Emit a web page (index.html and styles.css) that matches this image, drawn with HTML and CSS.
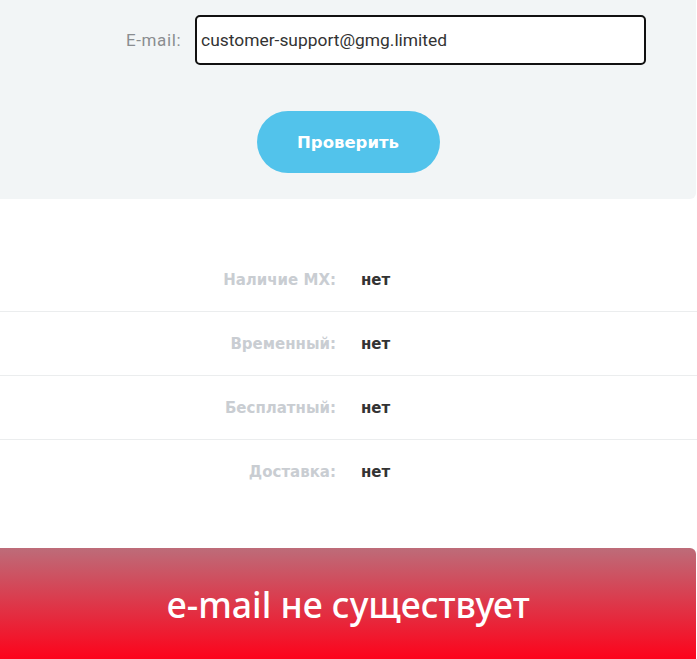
FILE: index.html
```html
<!DOCTYPE html>
<html>
<head>
    <title>Проверка e-mail</title>
    <link rel="stylesheet" href="styles.css">
</head>
<body>
    <div class="check-form">
        <div class="field">
            <label for="email">E-mail:</label>
            <input id="email" type="text" value="customer-support@gmg.limited">
        </div>
        <div class="actions">
            <button class="btn-check">Проверить</button>
        </div>
    </div>

    <div class="results">
        <div class="row">
            <div class="row-label">Наличие MX:</div>
            <div class="row-value">нет</div>
        </div>
        <div class="row">
            <div class="row-label">Временный:</div>
            <div class="row-value">нет</div>
        </div>
        <div class="row">
            <div class="row-label">Бесплатный:</div>
            <div class="row-value">нет</div>
        </div>
        <div class="row">
            <div class="row-label">Доставка:</div>
            <div class="row-value">нет</div>
        </div>
    </div>

    <div class="verdict">e-mail не существует</div>
</body>
</html>
```

FILE: styles.css
```css
body {
    margin: 0;
    background: #fff;
    font-family: "Noto Sans", Arial, sans-serif;
    overflow: hidden;
}
.check-form {
    background: #f2f5f6;
    margin-right: 1px;
    border-bottom-right-radius: 6px;
    padding: 15px 0 26px;
}
.field {
    display: flex;
    align-items: center;
    padding: 0 50px 0 126px;
}
.field label {
    font-family: Roboto, sans-serif;
    font-size: 17px;
    letter-spacing: 0.6px;
    color: #8a8d90;
    margin-right: 14px;
}
.field input {
    flex: 1;
    height: 50px;
    box-sizing: border-box;
    border: 2px solid #111;
    border-radius: 5px;
    padding: 0 4px;
    font-family: Roboto, sans-serif;
    font-size: 17.4px;
    color: #333;
    background: #fff;
    outline: none;
}
.actions {
    display: flex;
    justify-content: center;
    margin-top: 46px;
}
.btn-check {
    width: 183px;
    height: 62px;
    border: none;
    border-radius: 31px;
    background: #52c3eb;
    color: #fff;
    font-family: "DejaVu Sans", sans-serif;
    font-weight: bold;
    font-size: 16.5px;
    cursor: pointer;
}
.results {
    padding-top: 49px;
}
.row {
    display: grid;
    grid-template-columns: 1fr 1fr;
    column-gap: 25px;
    align-items: center;
    height: 63px;
    border-bottom: 1px solid #ebedee;
    font-family: "DejaVu Sans", sans-serif;
    font-weight: bold;
    font-size: 15px;
}
.row:last-child {
    border-bottom: none;
}
.row-label {
    text-align: right;
    color: #c9cdd2;
}
.row-value {
    color: #333;
}
.verdict {
    margin-top: 45px;
    margin-right: 1px;
    border-top-right-radius: 6px;
    padding: 38px 0 40px;
    background: linear-gradient(#bd6c79, #ff0018);
    color: #fff;
    text-align: center;
    font-family: "Noto Sans", sans-serif;
    font-weight: 500;
    font-size: 35.5px;
    line-height: 36px;
}
```
